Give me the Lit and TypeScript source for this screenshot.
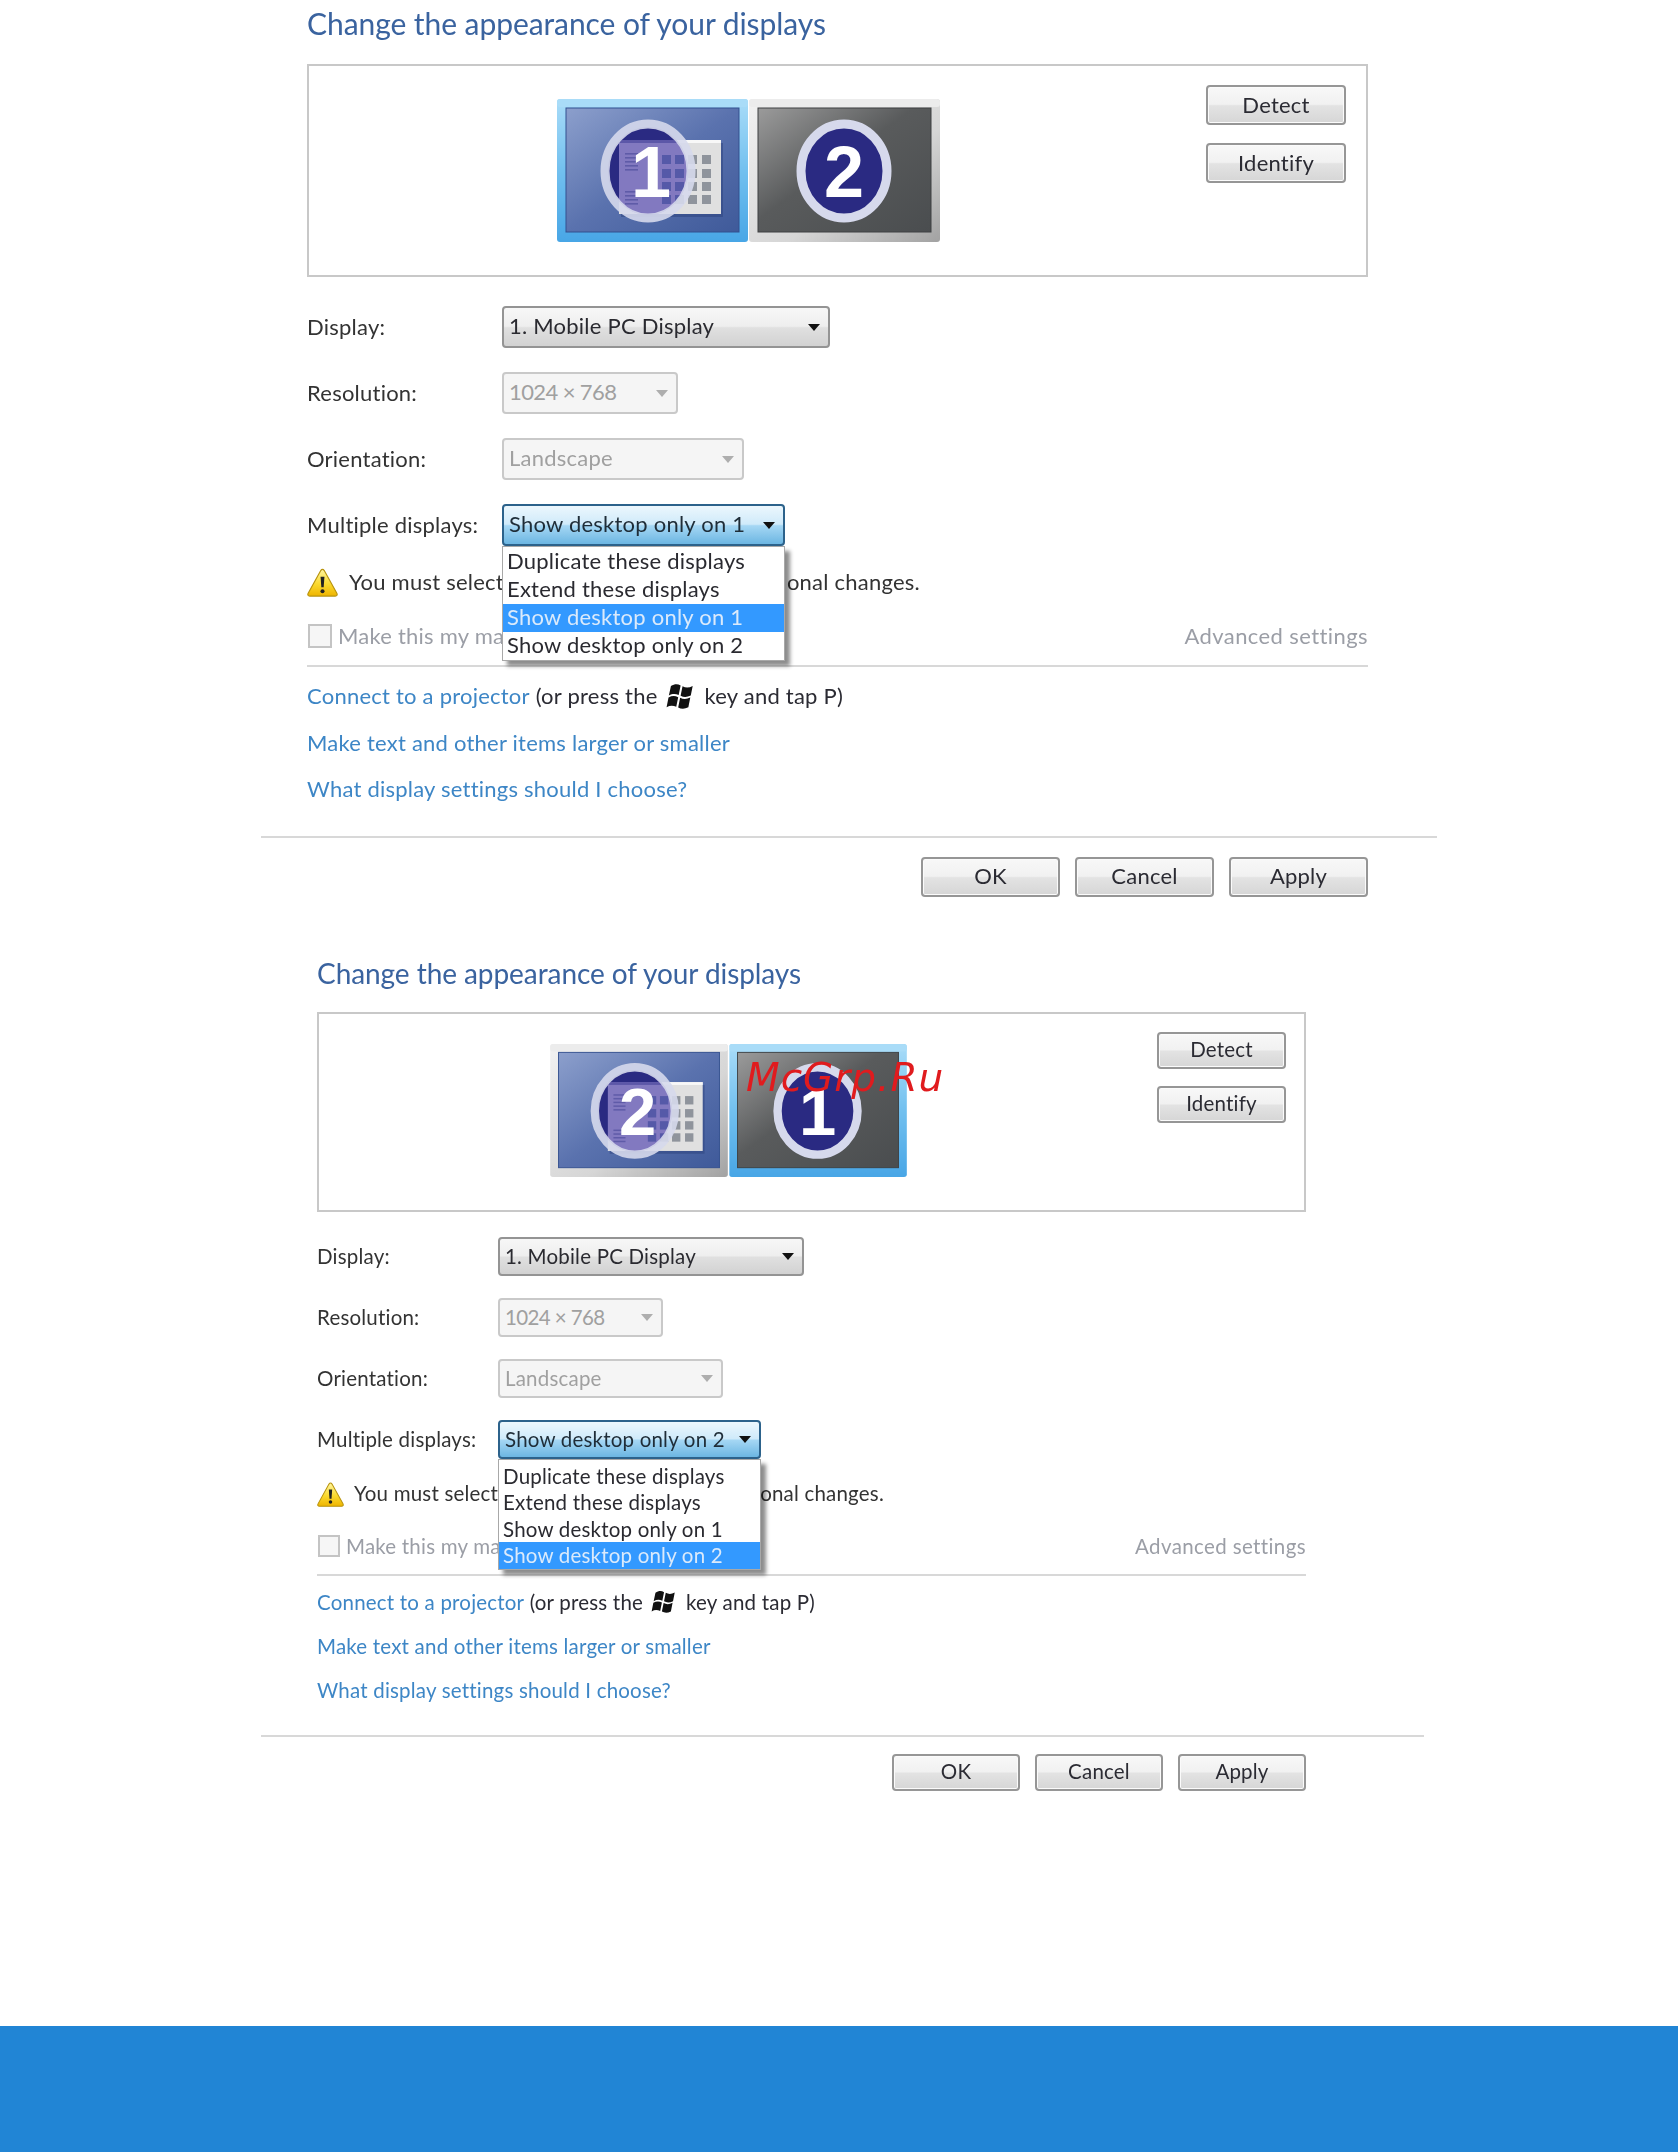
import { LitElement, html, css, svg } from "lit";
import { customElement, property } from "lit/decorators.js";

const GRID_X = [105, 118, 131, 145];
const GRID_Y = [56, 70, 83, 96];

function calendarCells(inner: boolean) {
  return GRID_X.flatMap((x) =>
    GRID_Y.map((y) => svg`<rect x=${x} y=${y} width="9" height="9" fill=${inner ? "#5559a8" : "#8f949c"}></rect>`)
  );
}

function monitor(num: number, primary: boolean, selected: boolean) {
  const cx = primary ? 91 : 95;
  const clip = `clip${num}`;
  return html`<svg class="mon" viewBox="0 0 191 143" aria-hidden="true">
    <rect x="0" y="0" width="191" height="143" rx="3" fill=${selected ? "url(#frameSel)" : "url(#frameOff)"}></rect>
    <rect x="0" y="0" width="191" height="8" rx="3" fill=${selected ? "#a9dcf8" : "#ececec"}></rect>
    <rect x="9" y="9" width="173" height="124" fill=${primary ? "url(#scrBlue)" : "url(#scrDark)"}
      stroke=${primary ? "#33508f" : "#3e4042"} stroke-width="1"></rect>
    ${primary
      ? svg`
        <rect x="64" y="44" width="102" height="74" fill="#2f4680" opacity=".55"></rect>
        <rect x="62" y="41" width="102" height="74" fill="#e0e0e0"></rect>
        <rect x="62" y="41" width="102" height="3" fill="#f8f8f8"></rect>
        ${calendarCells(false)}`
      : ""}
    <clipPath id=${clip}><ellipse cx=${cx} cy="72" rx="40" ry="44"></ellipse></clipPath>
    <ellipse cx=${cx} cy="72" rx="40" ry="44" fill="#2a2a82"></ellipse>
    ${primary
      ? svg`<g clip-path=${`url(#${clip})`}>
        <rect x="62" y="41" width="102" height="74" fill="#8279c0"></rect>
        <rect x="62" y="41" width="102" height="3" fill="#5c57a8"></rect>
        ${calendarCells(true)}
        ${[54, 58, 62, 66, 70, 92, 96, 100, 104].map(
          (y) => svg`<rect x="68" y=${y} width="13" height="1.6" fill="#5f5ba8"></rect>`
        )}
      </g>`
      : ""}
    <ellipse cx=${cx} cy="72" rx="43" ry="47" fill="none" stroke="#d6d9ec" stroke-width="9" opacity=${primary ? ".9" : "1"}></ellipse>
    <text x=${primary ? cx + 3 : cx} y="98" text-anchor="middle" class="num">${num}</text>
  </svg>`;
}

const winLogo = html`<svg class="win" viewBox="0 1 23 21.5" aria-hidden="true">
  <path fill="#111" d="M4 3.5C7 1.6 9.6 1.6 12 3l-1.6 8C7.8 9.8 5.2 9.8 2.3 11.4z"></path>
  <path fill="#111" d="M13.6 3.6c2.6 1.5 5.4 1.4 8.4-.2l-1.6 8c-3 1.5-5.8 1.6-8.4.2z"></path>
  <path fill="#111" d="M2 13c2.8-1.6 5.4-1.6 8-.3l-1.6 8C5.8 19.4 3.2 19.4.4 21z"></path>
  <path fill="#111" d="M11.6 13.2c2.6 1.4 5.4 1.4 8.4-.2l-1.6 8c-3 1.6-5.8 1.6-8.4.2z"></path>
</svg>`;

const warnIcon = html`<svg class="warn" viewBox="0 0 32 30" aria-hidden="true">
  <defs><linearGradient id="wg" x1="0" y1="0" x2="0" y2="1">
    <stop offset="0" stop-color="#fff6a0"></stop><stop offset=".55" stop-color="#fbd92e"></stop><stop offset="1" stop-color="#eeb400"></stop>
  </linearGradient></defs>
  <path d="M16 1.5c.8 0 1.3.4 1.8 1.2l13 23.4c.8 1.5.1 2.9-1.6 2.9H2.8c-1.7 0-2.4-1.4-1.6-2.9l13-23.4c.5-.8 1-1.2 1.8-1.2z" fill="url(#wg)" stroke="#b8930e" stroke-width="1.2"></path>
  <path d="M14 9h4l-.8 11h-2.4z" fill="#222"></path>
  <circle cx="16" cy="24" r="2.1" fill="#222"></circle>
</svg>`;

@customElement("display-panel")
class DisplayPanel extends LitElement {
  @property() variant = "a";
  @property({ type: Array }) monitors: { n: number; primary: boolean; selected: boolean }[] = [];
  @property() multi = "";

  static styles = css`
    :host { display: block; font-family: Lato, "Noto Sans", sans-serif; color: #333; }
    .panel { filter: blur(0.6px); }
    .v-a {
      --fs: 22px; --ls: 0.23px; --tfs: 30px; --tls: -0.07px; --ml: 261px; --w: 1176px; --pl: 46px; --pr: 69px;
      --bt: 14px; --bh: 213px; --mpl: 248px; --mpt: 33px; --mw: 191px; --mh: 143px;
      --bw: 140px; --btnh: 40px; --bgap: 18px; --bpr: 20px; --bpt: 19px;
      --rtop: 17px; --rowh: 66px; --selh: 42px; --col: 195px;
      --s1: 328px; --s2: 176px; --s3: 242px; --s4: 283px; --ddrow: 28px; --ddp: 1px; --ddlh: -2px;
      --warnh: 48px; --chkh: 61px; --lt: 6px; --lh: 46.5px; --ft: 23px; --fpt: 19px; --fgap: 15px; --top: 0px;
      --cb: 24px; --ic: 31px; --icgap: 11px; --wgap: 283px;
      --tlh: 46px; --lp: 2px; --sp: 3px; --winw: 28px; --winh: 26px; --winl: 9px; --winr: 10px;
    }
    .v-b {
      --fs: 20.5px; --ls: 0.2px; --tfs: 28px; --tls: -0.07px; --ml: 261px; --w: 1163px; --pl: 56px; --pr: 118px;
      --bt: 13px; --bh: 200px; --mpl: 231px; --mpt: 30px; --mw: 178px; --mh: 133px;
      --bw: 129px; --btnh: 37px; --bgap: 17px; --bpr: 18px; --bpt: 18px;
      --rtop: 14px; --rowh: 61px; --selh: 39px; --col: 181px;
      --s1: 306px; --s2: 165px; --s3: 225px; --s4: 263px; --ddrow: 26.5px; --ddp: 3px; --ddlh: 0px;
      --warnh: 49px; --chkh: 57px; --lt: 4px; --lh: 44px; --ft: 23px; --fpt: 17px; --fgap: 15px; --top: 52px;
      --cb: 22px; --ic: 27px; --icgap: 10px; --wgap: 262px;
      --tlh: 48px; --lp: 0px; --sp: 0px; --winw: 25px; --winh: 23px; --winl: 8px; --winr: 10px;
    }
    .panel { margin-left: var(--ml); width: var(--w); padding-top: var(--top); box-sizing: border-box; font-size: var(--fs); letter-spacing: var(--ls); }
    .content { padding: 0 var(--pr) 0 var(--pl); }
    h2 { margin: 0; height: 50px; line-height: var(--tlh); font-size: var(--tfs); letter-spacing: var(--tls); font-weight: 400; color: #3a639f; white-space: nowrap; }
    .box { margin-top: var(--bt); height: var(--bh); box-sizing: border-box; border: 2px solid #c8c8c8; display: flex; justify-content: space-between; padding: var(--mpt) var(--bpr) 0 var(--mpl); background: #fff; }
    .mons { display: flex; gap: 1px; align-items: flex-start; }
    .mon { width: var(--mw); height: var(--mh); display: block; }
    .num { font: 700 72px "Liberation Sans", Arial, sans-serif; fill: #fff; letter-spacing: 0; }
    .btns { display: flex; flex-direction: column; gap: var(--bgap); margin-top: calc(var(--bpt) - var(--mpt)); }
    .btn { width: var(--bw); height: var(--btnh); box-sizing: border-box; border: 2px solid #969696; border-radius: 4px; display: flex; align-items: center; justify-content: center; padding-bottom: 2px; color: #2b2b33; background: linear-gradient(#f8f8f8 0, #f1f1f1 48%, #e3e3e3 52%, #d6d6d6 100%); box-shadow: inset 0 0 0 1px #fbfbfb; }
    .rows { margin-top: var(--rtop); }
    .row { display: flex; align-items: center; height: var(--rowh); }
    .lab { width: var(--col); flex: none; color: #333; padding-bottom: var(--lp); box-sizing: border-box; }
    .sel { position: relative; height: var(--selh); box-sizing: border-box; border: 2px solid #949494; border-radius: 4px; display: flex; align-items: center; justify-content: space-between; padding: 0 8px 0 5px; color: #2a2a30; background: linear-gradient(#f7f7f7 0, #eeeeee 48%, #e0e0e0 52%, #d2d2d2 100%); white-space: nowrap; }
    .sel > span { padding-bottom: var(--sp); }
    .s1 { width: var(--s1); }
    .s2 { width: var(--s2); }
    .s3 { width: var(--s3); }
    .s4 { width: var(--s4); }
    .s2 > span { letter-spacing: -0.6px; }
    .arrow { width: 0; height: 0; border-left: 6px solid transparent; border-right: 6px solid transparent; border-top: 7px solid #111; flex: none; }
    .dis { color: #a0a0a0; background: #f5f5f5; border-color: #c9c9c9; }
    .dis .arrow { border-top-color: #aeaeae; }
    .foc { border-color: #2c628b; color: #1f2d38; background: linear-gradient(#ecf7fd 0, #cfeafa 48%, #a5d7f4 52%, #6cb6e2 100%); }
    .dd { position: absolute; left: -2px; right: -2px; top: calc(var(--selh) - 2px); z-index: 5; background: #fff; border: 1px solid #a8a8a8; box-sizing: border-box; padding: var(--ddp) 0 0; box-shadow: 5px 5px 4px rgba(0,0,0,.45); color: #2a2a30; }
    .it { height: var(--ddrow); line-height: calc(var(--ddrow) + var(--ddlh)); padding-left: 4px; }
    .it.on { background: #3399ff; color: #dbeafb; }
    .warnrow { display: flex; align-items: center; height: var(--warnh); gap: var(--icgap); white-space: nowrap; }
    .warnrow span { padding-bottom: 2px; }
    .warn { width: var(--ic); height: var(--ic); flex: none; }
    .warnrow .tail { margin-left: calc(var(--wgap) - var(--icgap)); }
    .chkrow { display: flex; align-items: center; height: var(--chkh); justify-content: space-between; color: #9b9ea6; border-bottom: 2px solid #d8d8d8; box-sizing: border-box; white-space: nowrap; }
    .chk { display: flex; align-items: center; gap: 6px; margin-left: 1px; }
    .cb { width: var(--cb); height: var(--cb); box-sizing: border-box; border: 2px solid #c4c4c4; background: #f6f6f6; display: block; }
    .adv { letter-spacing: calc(var(--ls) + 0.18px); }
    .links { margin-top: var(--lt); }
    .link { height: var(--lh); line-height: var(--lh); white-space: nowrap; color: #2b2b33; display: flex; align-items: center; }
    .link a { color: #3d86c6; text-decoration: none; }
    .link .sp { white-space: pre; }
    .win { width: var(--winw); height: var(--winh); margin: 0 var(--winr) 0 var(--winl); flex: none; }
    .foot { margin-top: var(--ft); border-top: 2px solid #d8d8d8; padding: var(--fpt) var(--pr) 0 0; display: flex; justify-content: flex-end; gap: var(--fgap); }
    .foot .btn { width: calc(var(--bw) - 1px); }
  `;

  render() {
    const items = ["Duplicate these displays", "Extend these displays", "Show desktop only on 1", "Show desktop only on 2"];
    return html`<div class="panel v-${this.variant}">
      <svg width="0" height="0" style="position:absolute" aria-hidden="true"><defs>
        <linearGradient id="frameSel" x1="0" y1="0" x2="0" y2="1">
          <stop offset="0" stop-color="#a9dcf8"></stop><stop offset=".5" stop-color="#72c0ef"></stop><stop offset="1" stop-color="#48a6e6"></stop>
        </linearGradient>
        <linearGradient id="frameOff" x1="0" y1="0" x2="1" y2="1">
          <stop offset="0" stop-color="#f2f2f2"></stop><stop offset=".6" stop-color="#d6d6d6"></stop><stop offset="1" stop-color="#a2a2a2"></stop>
        </linearGradient>
        <linearGradient id="scrBlue" x1="0" y1="0" x2="1" y2="1">
          <stop offset="0" stop-color="#8c9fcc"></stop><stop offset=".5" stop-color="#5a72ae"></stop><stop offset="1" stop-color="#3f5a9a"></stop>
        </linearGradient>
        <linearGradient id="scrDark" x1="0" y1="0" x2="1" y2="1">
          <stop offset="0" stop-color="#9b9b9b"></stop><stop offset=".45" stop-color="#595b5c"></stop><stop offset="1" stop-color="#4a4d4f"></stop>
        </linearGradient>
      </defs></svg>
      <div class="content">
        <h2>Change the appearance of your displays</h2>
        <div class="box">
          <div class="mons">${this.monitors.map((m) => monitor(m.n, m.primary, m.selected))}</div>
          <div class="btns"><div class="btn">Detect</div><div class="btn">Identify</div></div>
        </div>
        <div class="rows">
          <div class="row"><div class="lab">Display:</div><div class="sel s1"><span>1. Mobile PC Display</span><i class="arrow"></i></div></div>
          <div class="row"><div class="lab">Resolution:</div><div class="sel s2 dis"><span>1024 × 768</span><i class="arrow"></i></div></div>
          <div class="row"><div class="lab">Orientation:</div><div class="sel s3 dis"><span>Landscape</span><i class="arrow"></i></div></div>
          <div class="row"><div class="lab">Multiple displays:</div>
            <div class="sel s4 foc"><span>${this.multi}</span><i class="arrow"></i>
              <div class="dd">${items.map((t) => html`<div class="it ${t === this.multi ? "on" : ""}">${t}</div>`)}</div>
            </div>
          </div>
        </div>
        <div class="warnrow">${warnIcon}<span>You must select</span><span class="tail">onal changes.</span></div>
        <div class="chkrow">
          <div class="chk"><i class="cb"></i><span>Make this my ma</span></div>
          <span class="adv">Advanced settings</span>
        </div>
        <div class="links">
          <div class="link"><a>Connect to a projector</a><span class="sp"> (or press the</span>${winLogo}<span>key and tap P)</span></div>
          <div class="link"><a>Make text and other items larger or smaller</a></div>
          <div class="link"><a>What display settings should I choose?</a></div>
        </div>
      </div>
      <div class="foot"><div class="btn">OK</div><div class="btn">Cancel</div><div class="btn">Apply</div></div>
    </div>`;
  }
}

@customElement("app-root")
class AppRoot extends LitElement {
  static styles = css`
    :host { display: flex; flex-direction: column; min-height: 2152px; position: relative; background: #fff; overflow: hidden; }
    .band { margin-top: auto; height: 126px; background: #2185d5; }
    .mark { position: absolute; left: 746px; top: 1055px; font: italic 400 39px "DejaVu Sans", sans-serif; letter-spacing: 1px; color: #e01b1e; white-space: nowrap; z-index: 9; }
  `;
  render() {
    return html`
      <display-panel variant="a" multi="Show desktop only on 1"
        .monitors=${[{ n: 1, primary: true, selected: true }, { n: 2, primary: false, selected: false }]}></display-panel>
      <display-panel variant="b" multi="Show desktop only on 2"
        .monitors=${[{ n: 2, primary: true, selected: false }, { n: 1, primary: false, selected: true }]}></display-panel>
      <div class="mark">McGrp.Ru</div>
      <div class="band"></div>`;
  }
}
